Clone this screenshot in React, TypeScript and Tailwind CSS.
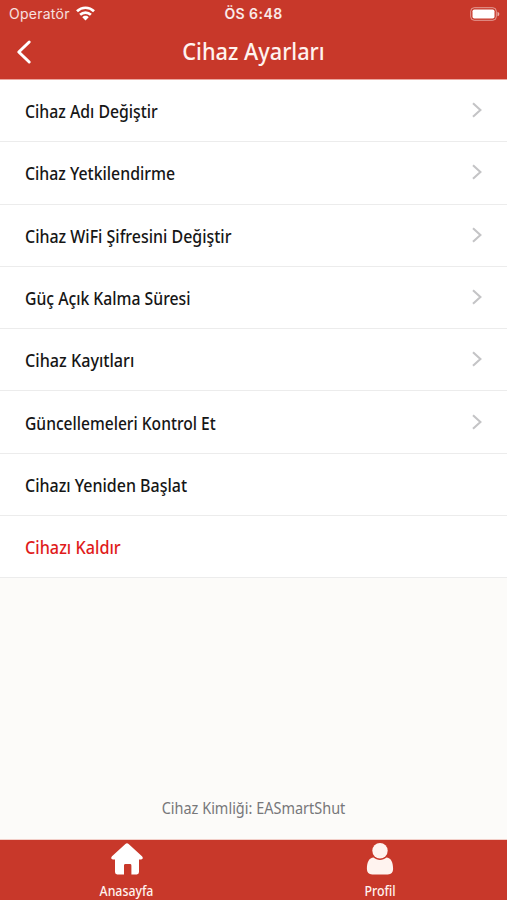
import { clsx } from "clsx";

type Row = { label: string; fit: string; chevron?: boolean; danger?: boolean };

const rows: Row[] = [
  { label: "Cihaz Adı Değiştir", fit: "scale-x-[0.903]", chevron: true },
  { label: "Cihaz Yetkilendirme", fit: "scale-x-[0.906]", chevron: true },
  { label: "Cihaz WiFi Şifresini Değiştir", fit: "scale-x-[0.912]", chevron: true },
  { label: "Güç Açık Kalma Süresi", fit: "scale-x-[0.9]", chevron: true },
  { label: "Cihaz Kayıtları", fit: "scale-x-[0.924]", chevron: true },
  { label: "Güncellemeleri Kontrol Et", fit: "scale-x-[0.892]", chevron: true },
  { label: "Cihazı Yeniden Başlat", fit: "scale-x-[0.914]" },
  { label: "Cihazı Kaldır", fit: "scale-x-[0.927]", danger: true },
];

function StatusBar() {
  return (
    <div className="grid h-[27px] grid-cols-3 items-center px-[9px] font-['Inter','Liberation_Sans',sans-serif] text-[14px] text-white">
      <div className="flex items-center gap-[6px] text-white/85">
        <span className="tracking-[0.25px]">Operatör</span>
        <svg width="19" height="15" viewBox="0 0 19 15" fill="none" stroke="white" strokeWidth="2.7">
          <path d="M1 5.2C5.8 0.6 13.2 0.6 18 5.2" />
          <path d="M4.1 8.7C7.2 5.8 11.8 5.8 14.9 8.7" />
          <path d="M6.3 11.2C8.1 9.3 10.9 9.3 12.7 11.2L9.5 14.4Z" fill="white" stroke="none" />
        </svg>
      </div>
      <span className="text-center font-semibold tracking-[0.45px] text-white/90">ÖS 6:48</span>
      <svg className="-mr-[2px] justify-self-end" width="30" height="14" viewBox="0 0 30 14" fill="none">
        <rect x="0.7" y="0.7" width="25.6" height="12.6" rx="3.6" stroke="white" strokeOpacity="0.5" />
        <rect x="2.5" y="2.5" width="22" height="9" rx="1.8" fill="white" />
        <path d="M27.5 4.7C29.9 5.6 29.9 8.4 27.5 9.3Z" fill="white" fillOpacity="0.6" />
      </svg>
    </div>
  );
}

function Header() {
  return (
    <header className="h-[80px] shrink-0 border-b border-[#eba79f] bg-[#c8382a]">
      <StatusBar />
      <div className="grid h-[50px] grid-cols-[60px_1fr_60px] items-center text-white">
        <svg className="ml-[16px]" width="16" height="26" viewBox="0 0 16 26" fill="none" stroke="white" strokeWidth="3" strokeLinecap="round" strokeLinejoin="round">
          <path d="M13.2 3L2.8 13L13.2 23" />
        </svg>
        <h1 className="mb-[2px] scale-x-[0.905] text-center text-[24px] font-medium whitespace-nowrap text-[#fff3ef]">Cihaz Ayarları</h1>
      </div>
    </header>
  );
}

function SettingsRow({ label, fit, chevron, danger }: Row) {
  return (
    <li className="flex h-[62.3px] items-center justify-between border-b border-[#ececec] bg-white pr-[24px] pl-[25px]">
      <span className={clsx("mt-px origin-left text-[17.5px] font-medium whitespace-nowrap", fit, danger ? "text-[#e01b1b]" : "text-[#161616]")}>
        {label}
      </span>
      {chevron && (
        <svg className="mb-px" width="12" height="16" viewBox="0 0 12 16" fill="none" stroke="#c4c4c6" strokeWidth="2.1">
          <path d="M2 1.2L9.4 8L2 14.8" />
        </svg>
      )}
    </li>
  );
}

function TabBar() {
  return (
    <nav className="grid h-[61px] shrink-0 grid-cols-2 border-t border-[#f3cfc9] bg-[#c8382a] text-[13.5px] font-medium text-[#fff3ef]">
      <a className="flex flex-col items-center pt-[3px]">
        <svg width="32" height="32" viewBox="0 0 32 32" fill="white">
          <path d="M14.4 1Q16 -0.4 17.6 1L31 13.3Q33 15.8 30 16.4H28V29Q28 31.4 25.8 31.4H20.4V22.4Q20.4 21 19 21H14.4Q13 21 13 22.4V31.4H6.2Q4 31.4 4 29V16.4H2Q-1 15.8 1 13.3Z" />
        </svg>
        <span className="mt-[7px] scale-x-[0.913] leading-[18px]">Anasayfa</span>
      </a>
      <a className="flex flex-col items-center pt-[3px]">
        <svg width="28" height="32" viewBox="0 0 28 32" fill="#fff3ef">
          <circle cx="14" cy="7.7" r="7.7" />
          <path d="M7.6 14.6C11 17.8 17 17.8 20.4 14.6C24.8 14.8 27.1 19 27.1 26C27.1 29.5 25.3 31.4 21.8 31.4H6.2C2.7 31.4 0.9 29.5 0.9 26C0.9 19 3.2 14.8 7.6 14.6Z" />
        </svg>
        <span className="mt-[7px] scale-x-[0.917] leading-[18px]">Profil</span>
      </a>
    </nav>
  );
}

export default function App() {
  return (
    <div className="flex h-[900px] w-[507px] flex-col overflow-hidden bg-[#fcfbf9] font-['Noto_Sans',sans-serif]">
      <Header />
      <ul>
        {rows.map((row) => (
          <SettingsRow key={row.label} {...row} />
        ))}
      </ul>
      <p className="mt-auto mb-[19px] scale-x-[0.934] text-center text-[15.5px] leading-[24px] text-[#77777a]">
        Cihaz Kimliği: EASmartShut
      </p>
      <TabBar />
    </div>
  );
}
